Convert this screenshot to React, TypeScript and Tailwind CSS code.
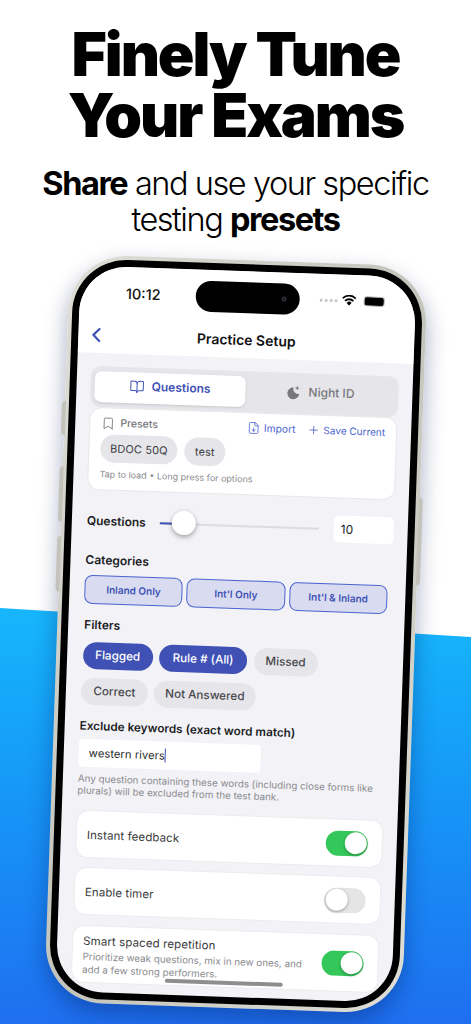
import React from 'react';
import { BookOpen, Bookmark, ChevronLeft, FileDown, Plus } from 'lucide-react';

const categories = ['Inland Only', "Int'l Only", "Int'l & Inland"];

const Chip = ({ label, active, w }: { label: string; active?: boolean; w: string }) => (
  <div
    className={`h-[27px] ${w} rounded-full flex items-center justify-center text-[11.7px] font-medium ${
      active ? 'bg-[#3f51b5] text-white' : 'bg-[#e5e5ea] text-[#48484c]'
    }`}
  >
    {label}
  </div>
);

const Toggle = ({ on }: { on?: boolean }) => (
  <div
    className={`w-[42px] h-[25px] rounded-full flex items-center p-[1.5px] ${
      on ? 'bg-[#34c759] justify-end' : 'bg-[#e5e5e5] justify-start'
    }`}
  >
    <div className="w-[22px] h-[22px] rounded-full bg-white shadow-[0_1px_3px_rgba(0,0,0,0.35)]"></div>
  </div>
);

export default function App() {
  return (
    <div className="relative w-[471px] h-[1024px] overflow-hidden bg-white font-[Inter,sans-serif] text-black">
      {/* blue backdrop */}
      <div className="absolute inset-x-0 top-[608px] bottom-0 bg-gradient-to-b from-[#17b6fc] to-[#1f6ff0] [clip-path:polygon(0_0,100%_29px,100%_100%,0_100%)]"></div>

      <div className="relative flex flex-col items-center">
        <h1 className="mt-[24px] text-[60.5px] leading-[61px] font-black tracking-[-2.1px] text-center">
          Finely Tune
          <br />
          Your Exams
        </h1>
        <p className="mt-[20px] text-[32.5px] leading-[36px] tracking-[-1.45px] font-light text-center">
          <b className="font-bold">Share</b> and use your specific
          <br />
          testing <b className="font-bold">presets</b>
        </p>
      </div>

      {/* phone */}
      <div className="absolute left-[57px] top-[260px] w-[358px] h-[748px] rotate-2">
        {/* side buttons */}
        <div className="absolute left-[-3px] top-[147px] w-[4px] h-[34px] rounded-l bg-[#c4c3bb]"></div>
        <div className="absolute left-[-3px] top-[212px] w-[4px] h-[56px] rounded-l bg-[#c4c3bb]"></div>
        <div className="absolute left-[-3px] top-[282px] w-[4px] h-[56px] rounded-l bg-[#c4c3bb]"></div>
        <div className="absolute right-[-3px] top-[231px] w-[4px] h-[88px] rounded-r bg-[#c4c3bb]"></div>

        <div className="h-full rounded-[58px] p-[4px] bg-gradient-to-br from-[#e0dfd7] via-[#c4c3ba] to-[#e0dfd6] shadow-[0_10px_22px_rgba(0,20,90,0.35)]">
          <div className="h-full rounded-[54px] bg-black p-[7px]">
            <div className="relative h-full rounded-[47px] overflow-hidden bg-[#f2f2f7]">
              {/* header */}
              <div className="h-[87px] bg-white relative">
                <div className="absolute left-[46px] top-[18px] text-[14.5px] leading-[18px] font-medium text-[#111]">10:12</div>
                <div className="absolute left-[116px] top-[11px] w-[104px] h-[31px] rounded-full bg-black flex items-center justify-end pr-[13px]">
                  <div className="w-[5px] h-[5px] rounded-full bg-[#1d1d24] border border-[#33333a]"></div>
                </div>
                <div className="absolute left-[240px] top-[25px] flex gap-[2px]">
                  <div className="w-[3px] h-[3px] rounded-full bg-[#c4c4c4]"></div>
                  <div className="w-[3px] h-[3px] rounded-full bg-[#c4c4c4]"></div>
                  <div className="w-[3px] h-[3px] rounded-full bg-[#c4c4c4]"></div>
                  <div className="w-[3px] h-[3px] rounded-full bg-[#c4c4c4]"></div>
                </div>
                <svg className="absolute left-[262px] top-[20px] w-[15px] h-[11px]" viewBox="0 0 15 11">
                  <path d="M7.5 11 5 8a3.6 3.6 0 0 1 5 0Z" fill="#000" />
                  <path d="M3.3 6.2a6 6 0 0 1 8.4 0M1 3.6a9.3 9.3 0 0 1 13 0" fill="none" stroke="#000" strokeWidth="1.8" />
                </svg>
                <div className="absolute left-[284px] top-[21px] w-[21px] h-[10px] rounded-[3px] bg-black border border-[#bbb]"></div>
                <ChevronLeft className="absolute left-[6px] top-[57px] w-[24px] h-[24px] text-[#3f51b5]" strokeWidth={2.2} />
                <div className="absolute inset-x-0 top-[60px] text-center text-[14px] leading-[18px] font-semibold text-[#111]">Practice Setup</div>
              </div>

              <div className="px-[14px]">
                {/* tabs */}
                <div className="mt-[13px] h-[41px] rounded-[10px] bg-[#e5e5ea] flex pt-[5px] pl-[4px] pr-[3px] pb-[5px]">
                  <div className="w-[151px] rounded-[7px] bg-white shadow-sm flex items-center justify-center gap-[7px] pb-[3px] text-[#3f51b5]">
                    <BookOpen className="w-[15px] h-[15px]" strokeWidth={1.6} />
                    <span className="text-[12px] font-semibold">Questions</span>
                  </div>
                  <div className="flex-1 flex items-center justify-center gap-[7px] pb-[3px] text-[#77777c]">
                    <svg className="w-[15px] h-[15px]" viewBox="0 0 24 24" fill="#77777c">
                      <path d="M11 4a8 8 0 0 0 9.5 10A9.5 9.5 0 1 1 11 4Z" />
                      <path d="M17 1l1 3 3 1-3 1-1 3-1-3-3-1 3-1Z" />
                    </svg>
                    <span className="text-[12px] font-medium">Night ID</span>
                  </div>
                </div>

                {/* presets card */}
                <div className="h-[83px] rounded-[12px] bg-white border border-[#e8e8ec] pl-[10px] pr-[11px] pt-[7px]">
                  <div className="flex items-center text-[#4b63cf]">
                    <Bookmark className="w-[14px] h-[14px] text-[#77777c] ml-[1px]" strokeWidth={1.5} />
                    <span className="ml-[5px] text-[10.5px] font-medium text-[#77777c]">Presets</span>
                    <FileDown className="ml-auto w-[13px] h-[13px]" strokeWidth={1.5} />
                    <span className="ml-[4px] text-[10.3px]">Import</span>
                    <Plus className="ml-[12px] w-[13px] h-[13px]" strokeWidth={1.5} />
                    <span className="ml-[3px] text-[10px]">Save Current</span>
                  </div>
                  <div className="mt-[3px] ml-px flex gap-[7px]">
                    <div className="h-[28px] w-[77px] rounded-full bg-[#e5e5ea] flex items-center justify-center text-[11px] tracking-[0.1px] text-[#3c3c43]">BDOC 50Q</div>
                    <div className="h-[28px] w-[41px] rounded-full bg-[#e5e5ea] flex items-center justify-center text-[11px] tracking-[0.1px] text-[#3c3c43]">test</div>
                  </div>
                  <div className="mt-[6px] ml-px text-[9px] leading-[12px] text-[#8a8a8e]">Tap to load • Long press for options</div>
                </div>

                {/* question count */}
                <div className="mt-[17px] h-[27px] flex items-center">
                  <span className="w-[73px] ml-px text-[12px] font-semibold text-[#1c1c1e]">Questions</span>
                  <div className="relative w-[159px] h-[2px] bg-[#dcdce0]">
                    <div className="w-[24px] h-full bg-[#3f51b5]"></div>
                    <div className="absolute left-[12px] top-[-12px] w-[24px] h-[24px] rounded-full bg-white shadow-[0_2px_5px_rgba(0,0,0,0.35)]"></div>
                  </div>
                  <div className="ml-auto w-[60px] h-[27px] rounded-[5px] bg-white flex items-center pl-[7px] text-[12px] text-[#1c1c1e]">10</div>
                </div>

                <div className="mt-[18px] ml-px text-[12px] leading-[16px] font-semibold text-[#1c1c1e]">Categories</div>
                <div className="mt-[7px] ml-px w-[303px] flex gap-[4px]">
                  {categories.map((c) => (
                    <div key={c} className="flex-1 h-[29px] rounded-[8px] bg-[#d9dcf0] border border-[#4b63cf] flex items-center justify-center text-[10px] font-semibold text-[#3f51b5]">
                      {c}
                    </div>
                  ))}
                </div>

                <div className="mt-[13px] ml-[2px] text-[12px] leading-[16px] font-semibold text-[#1c1c1e]">Filters</div>
                <div className="mt-[9px] ml-[1.5px] flex gap-[6.5px]">
                  <Chip label="Flagged" active w="w-[70px]" />
                  <Chip label="Rule # (All)" active w="w-[88px]" />
                  <Chip label="Missed" w="w-[64px]" />
                </div>
                <div className="mt-[9px] ml-px flex gap-[6px]">
                  <Chip label="Correct" w="w-[67px]" />
                  <Chip label="Not Answered" w="w-[102px]" />
                </div>

                <div className="mt-[13px] ml-px text-[11.75px] leading-[16px] font-semibold text-[#1c1c1e]">Exclude keywords (exact word match)</div>
                <div className="mt-[5px] ml-px w-[182px] h-[28px] rounded-[4px] bg-white flex items-center pl-[10px] text-[11.3px] text-[#2c2c2e]">
                  western rivers
                  <span className="w-px h-[14px] bg-[#3f51b5]"></span>
                </div>
                <p className="mt-[6px] ml-px text-[9.8px] leading-[12px] text-[#8a8a8e]">
                  Any question containing these words (including close forms like plurals) will be excluded from the test bank.
                </p>

                {/* switches */}
                <div className="mt-[13px] ml-px h-[48px] rounded-[12px] bg-white border border-[#ececf0] flex items-center justify-between pl-[10px] pr-[14px]">
                  <span className="pt-[4px] text-[11.5px] tracking-[0.1px] text-[#3a3a3c]">Instant feedback</span>
                  <Toggle on />
                </div>
                <div className="mt-[9px] ml-px h-[48px] rounded-[12px] bg-white border border-[#ececf0] flex items-center justify-between pl-[10px] pr-[14px]">
                  <span className="pt-[4px] text-[11.5px] tracking-[0.1px] text-[#3a3a3c]">Enable timer</span>
                  <Toggle />
                </div>
                <div className="mt-[10px] ml-px h-[58px] rounded-[12px] bg-white border border-[#ececf0] flex items-center justify-between pl-[10px] pr-[14px]">
                  <div className="w-[226px]">
                    <div className="text-[11.5px] leading-[16px] tracking-[0.1px] text-[#3a3a3c]">Smart spaced repetition</div>
                    <div className="mt-[1px] text-[9.8px] leading-[13px] text-[#8a8a8e]">Prioritize weak questions, mix in new ones, and add a few strong performers.</div>
                  </div>
                  <Toggle on />
                </div>
              </div>

              <div className="absolute left-[109px] bottom-[12px] w-[118px] h-[4px] rounded-full bg-[#8e8e8e]"></div>
            </div>
          </div>
        </div>
      </div>
    </div>
  );
}
